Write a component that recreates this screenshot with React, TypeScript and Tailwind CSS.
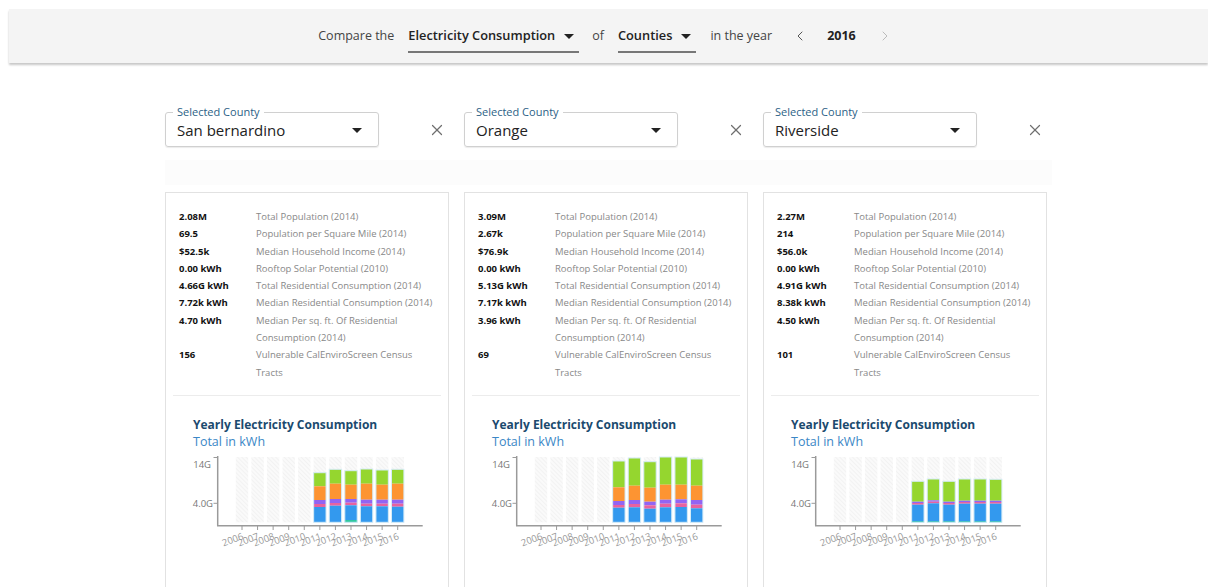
import { ChevronLeft, ChevronRight, X } from "lucide-react";

const FONT = "font-['Open_Sans','Noto_Sans',sans-serif]";

type Bar = { year: number; segs: [string, number, number][] };

// segment list: [colour, top y, bottom y] in chart pixels (baseline 72.3)
const GREEN = "#95d62f";
const ORANGE = "#fd9432";
const PURPLE = "#9264f3";
const PINK = "#e8629f";
const BLUE = "#3399ee";
const TEAL = "#2fc7a0";

const BASE = 72.3;

function stack(year: number, tops: number[], colors: string[], teal = 0): Bar {
  const segs: [string, number, number][] = [];
  for (let i = 0; i < colors.length; i++) {
    const top = tops[i];
    const bottom = i + 1 < tops.length ? tops[i + 1] : BASE;
    segs.push([colors[i], top, bottom]);
  }
  if (teal) segs.push([TEAL, BASE - teal, BASE]);
  return { year, segs };
}

const FULL = [GREEN, ORANGE, PURPLE, PINK, BLUE];
const NO_ORANGE = [GREEN, PURPLE, PINK, BLUE];

const counties = [
  {
    name: "San bernardino",
    stats: [
      ["2.08M", "Total Population (2014)"],
      ["69.5", "Population per Square Mile (2014)"],
      ["$52.5k", "Median Household Income (2014)"],
      ["0.00 kWh", "Rooftop Solar Potential (2010)"],
      ["4.66G kWh", "Total Residential Consumption (2014)"],
      ["7.72k kWh", "Median Residential Consumption (2014)"],
      ["4.70 kWh", "Median Per sq. ft. Of Residential Consumption (2014)"],
      ["156", "Vulnerable CalEnviroScreen Census Tracts"],
    ],
    bars: [
      stack(2011, [22.7, 36.3, 50, 54, 57], FULL),
      stack(2012, [19.3, 33.7, 49, 53, 55.7], FULL),
      stack(2013, [20.7, 34.7, 49, 52.7, 55.3], FULL, 2.3),
      stack(2014, [19, 33.7, 49.7, 53.7, 56.3], FULL),
      stack(2015, [20, 34.7, 49.7, 53.7, 56.3], FULL),
      stack(2016, [19.3, 33.7, 49.7, 53.7, 56.7], FULL),
    ],
  },
  {
    name: "Orange",
    stats: [
      ["3.09M", "Total Population (2014)"],
      ["2.67k", "Population per Square Mile (2014)"],
      ["$76.9k", "Median Household Income (2014)"],
      ["0.00 kWh", "Rooftop Solar Potential (2010)"],
      ["5.13G kWh", "Total Residential Consumption (2014)"],
      ["7.17k kWh", "Median Residential Consumption (2014)"],
      ["3.96 kWh", "Median Per sq. ft. Of Residential Consumption (2014)"],
      ["69", "Vulnerable CalEnviroScreen Census Tracts"],
    ],
    bars: [
      stack(2011, [11, 37.3, 51, 55, 57.7], FULL),
      stack(2012, [8, 35.7, 50, 54, 57.3], FULL),
      stack(2013, [11.7, 37.7, 51.7, 55.3, 58.7], FULL),
      stack(2014, [7, 34.7, 49.7, 53.7, 57.3], FULL),
      stack(2015, [7, 34.7, 49.3, 53.3, 57], FULL),
      stack(2016, [9, 35.7, 50, 54.7, 58.3], FULL),
    ],
  },
  {
    name: "Riverside",
    stats: [
      ["2.27M", "Total Population (2014)"],
      ["214", "Population per Square Mile (2014)"],
      ["$56.0k", "Median Household Income (2014)"],
      ["0.00 kWh", "Rooftop Solar Potential (2010)"],
      ["4.91G kWh", "Total Residential Consumption (2014)"],
      ["8.38k kWh", "Median Residential Consumption (2014)"],
      ["4.50 kWh", "Median Per sq. ft. Of Residential Consumption (2014)"],
      ["101", "Vulnerable CalEnviroScreen Census Tracts"],
    ],
    bars: [
      stack(2011, [31.3, 51.7, 53, 54.7], NO_ORANGE, 1),
      stack(2012, [29, 50.3, 51.7, 53.3], NO_ORANGE, 1),
      stack(2013, [31.3, 51.7, 53, 54.7], NO_ORANGE, 1),
      stack(2014, [29, 50.7, 52, 53.7], NO_ORANGE, 1),
      stack(2015, [29, 50.7, 52, 53.7], NO_ORANGE, 1),
      stack(2016, [29.3, 50.7, 52, 53.7], NO_ORANGE, 1),
    ],
  },
];

const YEARS = [2006, 2007, 2008, 2009, 2010, 2011, 2012, 2013, 2014, 2015, 2016];
const X0 = 76;
const STEP = 15.57;

function Caret({ className = "" }: { className?: string }) {
  return (
    <svg width="10" height="5" viewBox="0 0 10 5" className={className}>
      <path d="M0 0h10L5 5z" fill="currentColor" />
    </svg>
  );
}

function Chart({ bars, id }: { bars: Bar[]; id: string }) {
  return (
    <svg width="284" height="110" className="block">
      <defs>
        <pattern id={`hatch-${id}`} width="3" height="3" patternUnits="userSpaceOnUse" patternTransform="rotate(-45)">
          <rect width="3" height="3" fill="#fafafa" />
          <line x1="0" y1="0" x2="0" y2="3" stroke="#ebebeb" strokeWidth="1" />
        </pattern>
      </defs>
      {YEARS.map((y, i) => (
        <rect key={y} x={X0 + STEP * i - 6.2} y={7} width={12.4} height={BASE - 7} fill={`url(#hatch-${id})`} />
      ))}
      {bars.map((b) => {
        const i = YEARS.indexOf(b.year);
        const x = X0 + STEP * i - 6.2;
        const top = Math.min(...b.segs.map((s) => s[1]));
        return (
          <g key={b.year}>
            {b.segs.map(([c, t, btm], k) => (
              <rect key={k} x={x} y={t} width={12.4} height={btm - t} fill={c} />
            ))}
            <rect x={x} y={top} width={12.4} height={BASE - top} fill="none" stroke="#d5ecf7" strokeWidth="1" />
          </g>
        );
      })}
      {/* axes */}
      <line x1="51.7" y1="6" x2="51.7" y2="75.7" stroke="#9a9a9a" strokeWidth="1.5" />
      <line x1="51" y1="75.7" x2="256.7" y2="75.7" stroke="#9a9a9a" strokeWidth="1.5" />
      <line x1="47.5" y1="7.5" x2="51.7" y2="7.5" stroke="#9a9a9a" strokeWidth="1" />
      <line x1="47.5" y1="53.3" x2="51.7" y2="53.3" stroke="#9a9a9a" strokeWidth="1" />
      <text x="45" y="18" textAnchor="end" fontSize="9.5" fill="#777" fontFamily="Open Sans, sans-serif">
        14G
      </text>
      <text x="47" y="56.5" textAnchor="end" fontSize="9.5" fill="#777" fontFamily="Open Sans, sans-serif">
        4.0G
      </text>
      {YEARS.map((y, i) => {
        const x = X0 + STEP * i;
        return (
          <g key={y}>
            <line x1={x} y1="75.7" x2={x} y2="80" stroke="#9a9a9a" strokeWidth="1" />
            <text
              x={x + 2}
              y={89}
              textAnchor="end"
              fontSize="9.5"
              fill="#999"
              fontFamily="Open Sans, sans-serif"
              transform={`rotate(-20 ${x + 2} 89)`}
            >
              {y}
            </text>
          </g>
        );
      })}
    </svg>
  );
}

export default function App() {
  return (
    <div className={`${FONT} min-h-screen bg-white pl-[9px] pt-[9px]`}>
      {/* query bar */}
      <div className="flex h-[54px] w-full items-center justify-center bg-[#f4f4f4] pr-[6px] text-[12.5px] text-[#444] shadow-[0_2px_2px_rgba(0,0,0,0.22)]">
        <span>Compare the</span>
        <span className="ml-[14px] flex items-center gap-[9px] border-b-2 border-[#777] pb-[5px] pt-[7px] pr-[5px] text-[12.8px] font-semibold text-[#222]">
          Electricity Consumption
          <Caret />
        </span>
        <span className="ml-[13px]">of</span>
        <span className="ml-[14px] flex items-center gap-[9px] border-b-2 border-[#777] pb-[5px] pt-[7px] pr-[5px] text-[12.8px] font-semibold text-[#222]">
          Counties
          <Caret />
        </span>
        <span className="ml-[14px]">in the year</span>
        <ChevronLeft size={16} strokeWidth={1.5} className="ml-[20px] text-[#555]" />
        <span className="ml-[19px] font-bold text-[#222]">2016</span>
        <ChevronRight size={16} strokeWidth={1.5} className="ml-[21px] text-[#bbb]" />
      </div>

      {/* county pickers */}
      <div className="ml-[156px] mt-[49px] flex">
        {counties.map((c) => (
          <div key={c.name} className="flex w-[299px] items-center">
            <div className="relative h-[35px] w-[214px] rounded-[3px] border border-[#d0d0d0] shadow-[0_1px_1px_rgba(0,0,0,0.08)]">
              <span className="absolute -top-[8px] left-[7px] bg-white px-[4px] text-[11px] leading-[14px] text-[#2b5f86]">
                Selected County
              </span>
              <div className="flex h-full items-center justify-between pl-[11px] pr-[16px] pt-[1px]">
                <span className="text-[15px] text-[#222]">{c.name}</span>
                <Caret className="text-[#222]" />
              </div>
            </div>
            <X size={18} strokeWidth={1.6} className="ml-[49px] text-[#6f6f6f]" />
          </div>
        ))}
      </div>

      <div className="ml-[156px] mt-[13px] h-[25px] w-[887px] bg-[#fcfcfc]" />

      {/* county cards */}
      <div className="ml-[156px] mt-[7px] flex gap-[15px]">
        {counties.map((c, ci) => (
          <div key={c.name} className="h-[420px] w-[284px] shrink-0 border border-[#e2e2e2] bg-white">
            <div className="pl-[13px] pr-[4px] pt-[15px]">
              {c.stats.map(([v, l]) => (
                <div key={l} className="grid grid-cols-[77px_1fr] text-[9.5px] leading-[17.3px]">
                  <span className="font-bold text-[#111]">{v}</span>
                  <span className="pr-[10px] text-[#888]">{l}</span>
                </div>
              ))}
            </div>
            <div className="mx-[7px] mt-[14px] border-t border-[#ececec]" />
            <div className="pl-[27px] pt-[20px]">
              <div className="text-[12px] font-bold leading-[17px] text-[#1b4a6e]">Yearly Electricity Consumption</div>
              <div className="text-[12.5px] leading-[17px] text-[#3b87c6]">Total in kWh</div>
            </div>
            <Chart bars={c.bars} id={String(ci)} />
          </div>
        ))}
      </div>
    </div>
  );
}
